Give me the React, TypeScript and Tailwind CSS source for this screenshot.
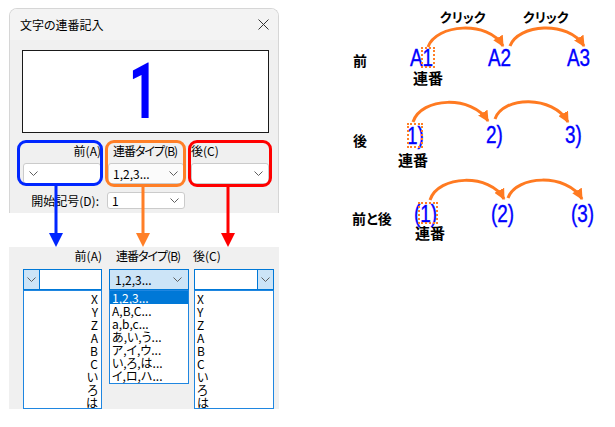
import React from "react";

const ui = "font-['Noto_Sans_CJK_JP',sans-serif] [font-feature-settings:'palt']";
const jp = "font-['Noto_Sans_CJK_JP',sans-serif] font-bold";
const latin = "font-['Liberation_Sans',Arial,sans-serif]";

function Chevron() {
  return (
    <svg width="9" height="5" viewBox="0 0 9 5">
      <path d="M0.5 0.5 L4.5 4.5 L8.5 0.5" fill="none" stroke="#5f5f5f" strokeWidth="1" />
    </svg>
  );
}

const seqTypes = ["1,2,3...", "A,B,C...", "a,b,c...", "あ,い,う...", "ア,イ,ウ...", "い,ろ,は...", "イ,ロ,ハ..."];
const marks = ["X", "Y", "Z", "A", "B", "C", "い", "ろ", "は"];

// blue sample text on the right, slightly condensed
function Sample({ x, y, text }: { x: number; y: number; text: string }) {
  return (
    <span
      className={`absolute ${latin} text-[23px] leading-none text-[#0000ff] origin-left scale-x-[0.82] whitespace-nowrap [-webkit-text-stroke:0.4px_#0000ff]`}
      style={{ left: x, top: y }}
    >
      {text}
    </span>
  );
}

function Label({ x, y, text, size }: { x: number; y: number; text: string; size: string }) {
  return (
    <span className={`absolute ${jp} ${size} leading-none text-black whitespace-nowrap`} style={{ left: x, top: y }}>
      {text}
    </span>
  );
}

function Dotted({ x, y, w, h }: { x: number; y: number; w: number; h: number }) {
  return (
    <div
      className="absolute border-2 border-dotted border-[#ff7f27]"
      style={{ left: x, top: y, width: w, height: h }}
    />
  );
}

export default function App() {
  return (
    <div className={`relative w-[615px] h-[427px] bg-white overflow-hidden text-black ${ui}`}>
      {/* Left column: dialog + expanded dropdowns */}
      <div className="pl-[9px] pt-[8px] w-[279px]">
        {/* Dialog */}
        <div className="w-[270px] border-t border-x border-[#d6d6d6] rounded-t-[8px] overflow-hidden">
          <div className="h-[31px] bg-[#f3f3f3] flex items-center justify-between pl-[10px] pr-[9px]">
            <span className="text-[12px] leading-none">文字の連番記入</span>
            <svg width="11" height="11" viewBox="0 0 11 11">
              <path d="M0.5 0.5 L10.5 10.5 M10.5 0.5 L0.5 10.5" stroke="#333" strokeWidth="1" />
            </svg>
          </div>
          <div className="bg-[#f0f0f0] h-[173px] pt-[10px] px-[12px]">
            <div className="h-[83px] w-[247px] bg-white border border-[#1a1a1a] flex justify-center items-center pr-[5px]">
              <span className="inline-block scale-x-[0.65] font-['Roboto',sans-serif] font-bold text-[78px] leading-none text-[#0000ff]">1</span>
            </div>
            <div className="mt-[10px] pl-[1px] grid grid-cols-[78px_76px_78px] gap-x-[7px] text-[12px]">
              <div className="h-[16px] leading-[16px] text-right whitespace-nowrap">前(A)</div>
              <div className="h-[16px] leading-[16px] pl-[5px] whitespace-nowrap tracking-[-1px]">連番タイプ(B)</div>
              <div className="h-[16px] leading-[16px] whitespace-nowrap">後(C)</div>
              <div className="mt-[4px] h-[21px] bg-white border border-[#cbcbcb] rounded-[3px] flex items-center pl-[5px]">
                <Chevron />
              </div>
              <div className="mt-[4px] h-[21px] bg-[#fbfbfb] border border-[#cbcbcb] rounded-[3px] flex items-center justify-between pl-[4px] pr-[5px]">
                <span className="leading-none">1,2,3...</span>
                <Chevron />
              </div>
              <div className="mt-[4px] h-[21px] bg-white border border-[#cbcbcb] rounded-[3px] flex items-center justify-end pr-[5px]">
                <Chevron />
              </div>
            </div>
            <div className="mt-[8px] flex items-center text-[12px]">
              <span className="w-[77px] text-right leading-none whitespace-nowrap">開始記号(D):</span>
              <div className="ml-[8px] w-[78px] h-[17px] bg-white border border-[#cbcbcb] rounded-[3px] flex items-center justify-between pl-[4px] pr-[5px]">
                <span className="leading-none">1</span>
                <Chevron />
              </div>
            </div>
          </div>
        </div>

        {/* Expanded lists */}
        <div className="mt-[34px] w-[270px] h-[162px] bg-[#f0f0f0] pl-[14px] pt-[1px] flex text-[12px]">
          <div className="w-[79px] flex flex-col">
            <div className="h-[16px] leading-[16px] text-right whitespace-nowrap">前(A)</div>
            <div className="mt-[5px] h-[21px] border border-[#0078d7] bg-white flex">
              <div className="w-[16px] bg-[#cce4f7] border-r border-[#0078d7] flex items-center justify-center">
                <Chevron />
              </div>
            </div>
            <div className="h-[119px] border border-[#1f86e0] bg-white pt-[1px] pr-[3px] text-right leading-[13px]">
              {marks.map((m) => (
                <div key={m} className="h-[13px]">{m}</div>
              ))}
            </div>
          </div>
          <div className="ml-[7px] w-[80px] flex flex-col">
            <div className="h-[16px] leading-[16px] pl-[7px] whitespace-nowrap tracking-[-1px]">連番タイプ(B)</div>
            <div className="mt-[5px] h-[21px] border border-[#0078d7] bg-[#cce4f7] flex items-center justify-between pl-[5px] pr-[6px]">
              <span className="leading-none">1,2,3...</span>
              <Chevron />
            </div>
            <div className="h-[94px] border border-[#1f86e0] bg-white leading-[13px]">
              {seqTypes.map((s, i) => (
                <div key={s} className={i === 0 ? "h-[13px] bg-[#0078d7] text-white pl-[2px]" : "h-[13px] pl-[2px]"}>
                  {s}
                </div>
              ))}
            </div>
          </div>
          <div className="ml-[5px] w-[80px] flex flex-col">
            <div className="h-[16px] leading-[16px] -ml-[1px] whitespace-nowrap">後(C)</div>
            <div className="mt-[5px] h-[21px] border border-[#0078d7] bg-white flex justify-end">
              <div className="w-[16px] bg-[#cce4f7] border-l border-[#0078d7] flex items-center justify-center">
                <Chevron />
              </div>
            </div>
            <div className="h-[119px] border border-[#1f86e0] bg-white pt-[1px] pl-[2px] leading-[13px]">
              {marks.map((m) => (
                <div key={m} className="h-[13px]">{m}</div>
              ))}
            </div>
          </div>
        </div>
      </div>

      {/* Highlight frames over the dialog */}
      <div className="absolute left-[17px] top-[140px] w-[86px] h-[46px] border-[3px] border-[#0026ff] rounded-[9px]" />
      <div className="absolute left-[105px] top-[140px] w-[81px] h-[47px] border-[3px] border-[#ff7f27] rounded-[9px]" />
      <div className="absolute left-[188px] top-[140px] w-[84px] h-[47px] border-[3px] border-[#ff0000] rounded-[9px]" />

      {/* Arrows from the dialog down to the lists */}
      <svg className="absolute left-0 top-0 pointer-events-none" width="290" height="250">
        <rect x="54.5" y="185" width="3" height="49" fill="#0026ff" />
        <polygon points="49,233 63,233 56,247" fill="#0026ff" />
        <rect x="141.5" y="186" width="3" height="48" fill="#ff7f27" />
        <polygon points="136,233 150,233 143,247" fill="#ff7f27" />
        <rect x="226.5" y="186" width="3" height="48" fill="#ff0000" />
        <polygon points="221,233 235,233 228,247" fill="#ff0000" />
      </svg>

      {/* Right-hand diagram */}
      <svg className="absolute left-0 top-0 pointer-events-none" width="615" height="427">
        <defs>
          <marker id="head" viewBox="0 0 10 10" refX="9" refY="5" markerWidth="11" markerHeight="11" markerUnits="userSpaceOnUse" orient="auto">
            <path d="M0 0 L10 5 L0 10 z" fill="#ff7a21" />
          </marker>
        </defs>
        <g fill="none" stroke="#ff7a21" strokeWidth="3" markerEnd="url(#head)">
          <path d="M428 47 C436 24, 488 20, 503 46" />
          <path d="M510 46 C518 24, 568 20, 584 46" />
          <path d="M413 122 C421 97, 472 95, 488 121" />
          <path d="M495 119 C503 96, 553 95, 568 122" />
          <path d="M430 200 C438 175, 490 173, 504 199" />
          <path d="M508 198 C516 175, 567 173, 582 199" />
        </g>
      </svg>

      <Label x={440} y={10} text="クリック" size="text-[13px]" />
      <Label x={523} y={10} text="クリック" size="text-[13px]" />

      <Label x={353} y={53} text="前" size="text-[14px]" />
      <Sample x={410} y={47} text="A1" />
      <Sample x={488} y={47} text="A2" />
      <Sample x={567} y={47} text="A3" />
      <Dotted x={421} y={47} w={14} h={21} />
      <Label x={413} y={70} text="連番" size="text-[15px]" />

      <Label x={353} y={133} text="後" size="text-[14px]" />
      <Sample x={407} y={125} text="1)" />
      <Sample x={486} y={124} text="2)" />
      <Sample x={565} y={124} text="3)" />
      <Dotted x={407} y={123} w={16} h={25} />
      <Label x={398} y={152} text="連番" size="text-[15px]" />

      <Label x={352} y={211} text="前と後" size="text-[14px]" />
      <Sample x={414} y={203} text="(1)" />
      <Sample x={491} y={203} text="(2)" />
      <Sample x={571} y={203} text="(3)" />
      <Dotted x={418} y={202} w={20} h={22} />
      <Label x={415} y={225} text="連番" size="text-[15px]" />
    </div>
  );
}
